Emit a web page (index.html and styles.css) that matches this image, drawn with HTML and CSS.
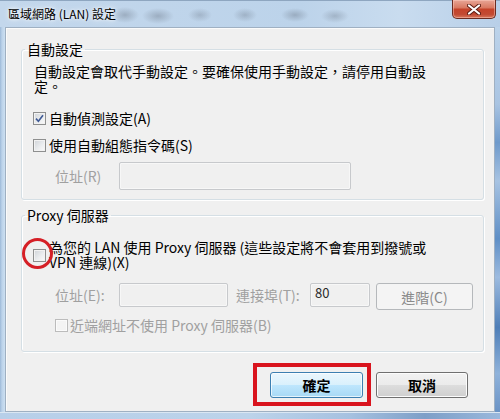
FILE: index.html
```html
<!DOCTYPE html>
<html lang="zh-Hant">
<head>
<meta charset="utf-8">
<title>區域網路 (LAN) 設定</title>
<link rel="stylesheet" href="styles.css">
</head>
<body>
<div class="window">
  <div class="titlebar">
    <span class="title">區域網路 (LAN) 設定</span>
    <div class="close">
      <svg width="14" height="11" viewBox="0 0 14 11">
        <path d="M2 1.5 L12 9.5 M12 1.5 L2 9.5" stroke="#5b1a10" stroke-width="4" stroke-linecap="round"/>
        <path d="M2 1.5 L12 9.5 M12 1.5 L2 9.5" stroke="#ffffff" stroke-width="2.2" stroke-linecap="round"/>
      </svg>
    </div>
  </div>
  <div class="frame-mid">
    <div class="frame-left"></div>
    <div class="client">
      <fieldset class="group g1">
        <legend>自動設定</legend>
        <div class="gbody g1-body">
          <p class="desc">自動設定會取代手動設定。要確保使用手動設定，請停用自動設定。</p>
          <label class="check-row r1"><span class="cb">
            <svg width="9" height="9" viewBox="0 0 9 9"><path d="M1 4.6 L3.4 7.2 L8 1.2" fill="none" stroke="#3f5a95" stroke-width="1.6"/></svg>
          </span>自動偵測設定(A)</label>
          <label class="check-row r2"><span class="cb"></span>使用自動組態指令碼(S)</label>
          <div class="field-row r3">
            <span class="lbl disabled">位址(R)</span>
            <span class="tb tb-script"></span>
          </div>
        </div>
      </fieldset>
      <fieldset class="group g2">
        <legend>Proxy 伺服器</legend>
        <div class="gbody g2-body">
          <label class="check-row proxy-row"><span class="cb"></span><span class="proxy-text">為您的 LAN 使用 Proxy 伺服器 (這些設定將不會套用到撥號或 VPN 連線)(X)</span></label>
          <div class="field-row addr-row">
            <span class="lbl disabled">位址(E):</span>
            <span class="tb tb-addr"></span>
            <span class="lbl lbl-port disabled">連接埠(T):</span>
            <span class="tb tb-port">80</span>
            <button class="btn btn-disabled" type="button">進階(C)</button>
          </div>
          <label class="check-row local-row disabled"><span class="cb cb-disabled"></span>近端網址不使用 Proxy 伺服器(B)</label>
        </div>
      </fieldset>
      <div class="buttons">
        <button class="btn btn-default" type="button">確定</button>
        <button class="btn btn-normal" type="button">取消</button>
      </div>
    </div>
    <div class="frame-right"></div>
  </div>
  <div class="frame-bottom"></div>
  <div class="mark-circle"></div>
  <div class="mark-rect"></div>
</div>
</body>
</html>
```
FILE: styles.css
```css
html, body {
  margin: 0;
  padding: 0;
}
body {
  background: #b9d1ea;
  font-family: "Noto Sans CJK TC", "Noto Sans", sans-serif;
  font-size: 14px;
  color: #000;
}
.window {
  position: relative;
  width: 500px;
  height: 419px;
  display: flex;
  flex-direction: column;
  overflow: hidden;
  background: #b9d1ea;
}

/* Title bar */
.titlebar {
  height: 27px;
  display: flex;
  align-items: flex-start;
  box-sizing: border-box;
  border-top: 1px solid #8ea6c0;
  background:
    radial-gradient(ellipse 14px 8px at 125px 14px, rgba(90,100,115,.35), transparent),
    radial-gradient(ellipse 16px 8px at 158px 15px, rgba(90,100,115,.35), transparent),
    radial-gradient(ellipse 12px 7px at 200px 14px, rgba(90,100,115,.28), transparent),
    radial-gradient(ellipse 12px 7px at 245px 14px, rgba(90,100,115,.3), transparent),
    radial-gradient(ellipse 14px 7px at 295px 14px, rgba(90,100,115,.35), transparent),
    radial-gradient(ellipse 14px 7px at 335px 15px, rgba(90,100,115,.3), transparent),
    linear-gradient(to right, #c3d7ec 0%, #bcd3ea 60%, #c9dcef 80%, #b8cfe8 100%);
}
.title {
  margin: 4px 0 0 8px;
  font-size: 12px;
  line-height: 17px;
  color: #000;
  text-shadow: 0 0 6px rgba(255,255,255,.95), 0 0 3px rgba(255,255,255,.9);
}
.close {
  margin: -1px 4px 0 auto;
  width: 44px;
  height: 19px;
  box-sizing: border-box;
  border: 1px solid #6b2c22;
  border-top: none;
  border-radius: 0 0 5px 5px;
  background: linear-gradient(to bottom, #e8a696 0%, #d97a63 42%, #c5432a 52%, #c24a33 80%, #d8775c 100%);
  box-shadow: inset 0 0 0 1px rgba(255,210,200,.45);
  display: flex;
  align-items: center;
  justify-content: center;
}

/* Frame */
.frame-mid {
  display: flex;
  height: 385px;
}
.frame-left {
  width: 5px;
  background: linear-gradient(to right, #9db9d8 0%, #bcd3ea 40%, #cde0f2 100%);
}
.frame-right {
  width: 5px;
  background:
    linear-gradient(to bottom, #bcd3ea 0%, #a9c4e2 20%, #6f9acb 30%, #a7c3e2 40%, #5f8fc6 55%, #9dbbdf 65%, #4f7fb8 78%, #8fb2da 90%, #6a93c6 100%);
}
.frame-bottom {
  height: 7px;
  background: linear-gradient(to right, #b7cfe9 0%, #bcd3ea 50%, #a6c1e0 70%, #7d9fc8 85%, #9ab8dc 100%);
  border-top: 1px solid #dbe7f3;
  box-sizing: border-box;
}

.client {
  width: 490px;
  box-sizing: border-box;
  border: 1px solid #9fb0c2;
  background: #f0f0f0;
  box-shadow: inset 1px 1px 0 #fbfbfb;
}

/* Group boxes */
.group {
  box-sizing: border-box;
  width: 463px;
  margin: 0 0 0 15px;
  padding: 0;
  min-inline-size: 0;
  border: 1px solid #d5dfe5;
  border-radius: 3px;
  box-shadow: inset 1px 1px 0 #fff, 1px 1px 0 #fff;
}
.group legend {
  margin-left: 3px;
  padding: 0 2px;
  font-size: 14px;
  line-height: 18px;
}
.g1 {
  margin-top: 12px;
}
.g2 {
  margin-top: 6px;
}
.gbody {
  padding-left: 11px;
}
.g1-body {
  padding-top: 6px;
  padding-bottom: 9px;
}
.g2-body {
  padding-top: 16px;
  padding-bottom: 17px;
}
.desc {
  margin: 0 0 0 1px;
  width: 400px;
  line-height: 15px;
}

/* Checkboxes */
.check-row {
  display: flex;
  align-items: center;
  line-height: 18px;
}
.cb {
  width: 13px;
  height: 13px;
  box-sizing: border-box;
  flex: none;
  margin-right: 3px;
  border: 1px solid #8e8f8f;
  background: linear-gradient(135deg, #cfd3d8 0%, #eceef0 60%, #fafafa 100%);
  box-shadow: inset 0 0 0 1px #f2f2f2;
  display: flex;
  align-items: center;
  justify-content: center;
}
.cb-disabled {
  border-color: #bcbcbc;
  background: #f4f4f4;
  box-shadow: inset 0 0 0 1px #fbfbfb;
}
.r1 {
  margin-top: 15px;
}
.r2 {
  margin-top: 9px;
}
.field-row {
  display: flex;
  align-items: center;
}
.r3 {
  margin-top: 8px;
}
.lbl {
  flex: none;
  width: 64px;
  margin-left: 22px;
  white-space: nowrap;
}
.disabled {
  color: #a0a0a0;
}
.tb {
  box-sizing: border-box;
  border: 1px solid #c7c9cc;
  border-radius: 2px;
  background: #f0f0f0;
  box-shadow: inset 0 0 0 1px #f7f7f7;
}
.tb-script {
  width: 232px;
  height: 28px;
}

.proxy-row {
  margin-top: 0;
}
.proxy-text {
  width: 386px;
  line-height: 15px;
}
.addr-row {
  margin-top: 13px;
  align-items: flex-start;
}
.addr-row .lbl {
  line-height: 24px;
}
.tb-addr {
  width: 109px;
  height: 24px;
}
.lbl-port {
  width: 74px;
  margin-left: 8px;
}
.tb-port {
  width: 60px;
  height: 24px;
  padding: 1px 0 0 4px;
  font-size: 13px;
  line-height: 16px;
  color: #2a2a2a;
}
.local-row {
  margin-top: 6px;
  padding-left: 22px;
}
.local-row .cb {
  margin-right: 2px;
}

/* Buttons */
.btn {
  font-family: inherit;
  font-size: 14px;
  line-height: 18px;
  padding: 0;
  box-sizing: border-box;
  border-radius: 3px;
  color: #000;
}
.btn-disabled {
  margin-left: 6px;
  width: 97px;
  height: 27px;
  border: 1px solid #b5b8bb;
  background: #f4f4f4;
  color: #8a8a8a;
}
.buttons {
  display: flex;
  justify-content: flex-end;
  gap: 13px;
  margin-top: 20px;
  padding-right: 26px;
}
.btn-default {
  width: 93px;
  height: 26px;
  border: 1px solid #3c7fb1;
  background: linear-gradient(to bottom, #eaf6fd 0%, #d9f0fc 50%, #bee6fd 51%, #a7d9f5 100%);
  box-shadow: inset 0 0 0 1px rgba(255,255,255,.7);
  font-weight: bold;
}
.btn-normal {
  width: 92px;
  height: 26px;
  border: 1px solid #707070;
  background: linear-gradient(to bottom, #f2f2f2 0%, #ebebeb 50%, #dddddd 51%, #cfcfcf 100%);
  box-shadow: inset 0 0 0 1px #fcfcfc;
  font-weight: bold;
}

/* Annotation overlays */
.mark-circle {
  position: absolute;
  left: 22px;
  top: 238px;
  width: 31px;
  height: 31px;
  box-sizing: border-box;
  border: 3px solid #d51f26;
  border-radius: 50%;
}
.mark-rect {
  position: absolute;
  left: 253px;
  top: 363px;
  width: 118px;
  height: 43px;
  box-sizing: border-box;
  border: 4px solid #d9141e;
}
```
